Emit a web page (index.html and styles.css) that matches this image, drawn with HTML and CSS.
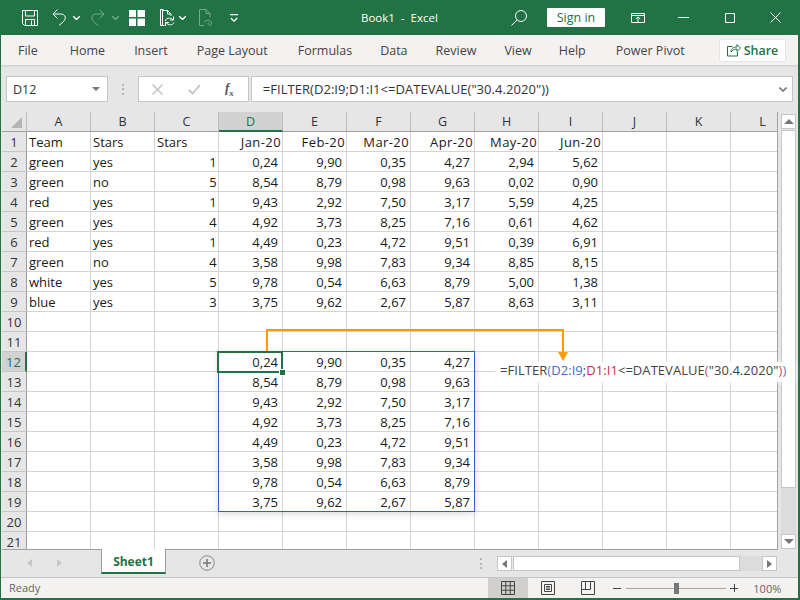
FILE: index.html
```html
<!DOCTYPE html>
<html lang="en">
<head>
<meta charset="utf-8">
<title>Book1 - Excel</title>
<link rel="stylesheet" href="styles.css">
</head>
<body>
<div class="app">
  <header class="titlebar">
    <div class="qat">
      <svg class="i save" width="16" height="16" viewBox="0 0 16 16"><path d="M.5.500h15v15H2.500l-2-2zM3.500.500v5.500h9V.5M3.500 15.500V9.500h9v6M9.500 10.500v5"/></svg>
      <svg class="i undo" width="14" height="17" viewBox="0 0 14 17"><path d="M5.500.5 1 5l4.500 4.500M1 5h7.500c5.500 0 6 5 2.500 8l-4 3.500"/></svg>
      <svg class="caret" width="7" height="4" viewBox="0 0 7 4"><path d="M0 0l3.500 3.500L7 0"/></svg>
      <svg class="i redo dim" width="14" height="17" viewBox="0 0 14 17"><path d="M8.500.5 13 5 8.500 9.500M13 5H5.500c-5.500 0-6 5-2.500 8l4 3.500"/></svg>
      <svg class="caret dim" width="7" height="4" viewBox="0 0 7 4"><path d="M0 0l3.500 3.500L7 0"/></svg>
      <svg class="form" width="16" height="16" viewBox="0 0 16 16"><path d="M0 0h7v7H0zM8.500 0H16v7H8.500zM0 8.500h7V16H0zM8.500 8.500H16V16H8.500z"/></svg>
      <svg class="i paste" width="15" height="17" viewBox="0 0 15 17"><path d="M2.500 16.500h-2V.5h3M4.500 16.500h-2V1.500h5l3.500 3.500v2M7.500 1.500V5H11M5.500 12c0-3 5-4 7.500-1M14 13.500c-1 3-6 3-7.500.500M13.500 7.500V11h-3.500M5.500 17v-3.500H9"/></svg>
      <svg class="caret" width="7" height="4" viewBox="0 0 7 4"><path d="M0 0l3.500 3.500L7 0"/></svg>
      <svg class="i print dim" width="14" height="17" viewBox="0 0 14 17"><path d="M.5 16.500V.5h6.500l4 4v4M7 .5v4h4M.5 16.500h4.500M5.500 13.500c0-2 4-3 6-1.500 2.500 2 .5 5-1.500 4-2-1-.5-3 1-2"/></svg>
      <svg class="customize" width="8" height="8" viewBox="0 0 8 8"><path d="M0 .5h8M.8 4l3.200 3.200L7.200 4"/></svg>
    </div>
    <div class="doc-title">Book1&nbsp; - &nbsp;Excel</div>
    <div class="win">
      <svg class="i search" width="16" height="16" viewBox="0 0 16 16"><circle cx="10" cy="6" r="5.500"/><path d="M6 10 .5 15.500"/></svg>
      <button class="signin">Sign in</button>
      <svg class="i display" width="14" height="10" viewBox="0 0 14 10"><path d="M.5.500h13v9H.5zM.5 2.500h13M7 9V4M4.800 6 7 3.800 9.200 6"/></svg>
      <svg class="i minimize" width="11" height="1" viewBox="0 0 11 1"><path d="M0 .5h11"/></svg>
      <svg class="i maximize" width="10" height="10" viewBox="0 0 10 10"><path d="M.5.500h9v9h-9z"/></svg>
      <svg class="i close" width="11" height="11" viewBox="0 0 11 11"><path d="M.5.500l10 10M10.500.500l-10 10"/></svg>
    </div>
  </header>

  <nav class="tabs">
    <span class="tab t-file">File</span>
    <span class="tab t-home">Home</span>
    <span class="tab t-insert">Insert</span>
    <span class="tab t-layout">Page Layout</span>
    <span class="tab t-formulas">Formulas</span>
    <span class="tab t-data">Data</span>
    <span class="tab t-review">Review</span>
    <span class="tab t-view">View</span>
    <span class="tab t-help">Help</span>
    <span class="tab t-pivot">Power Pivot</span>
    <span class="share">
      <svg class="share-icon" width="14" height="14" viewBox="0 0 14 14"><path d="M5.500 3.500H.5v9.500h10V9M4 9c0-4 3-5 6-5V1.500L13.500 5 10 8.500V6C7.500 6 5.500 7 4 9z"/></svg>
      Share
    </span>
  </nav>

  <section class="formulabar">
    <div class="namebox"><span>D12</span><i class="tri-down"></i></div>
    <div class="grip"></div>
    <div class="fx-buttons">
      <svg class="fx-x" width="11" height="11" viewBox="0 0 11 11"><path d="M.5.500l10 10M10.500.500l-10 10"/></svg>
      <svg class="fx-check" width="13" height="11" viewBox="0 0 13 11"><path d="M1 6l3.500 3.500L12 1"/></svg>
      <span class="fx-label">f<sub>x</sub></span>
    </div>
    <div class="formula-input"><span>=FILTER(D2:I9;D1:I1&lt;=DATEVALUE("30.4.2020"))</span>
      <svg class="chev" width="8" height="5" viewBox="0 0 8 5"><path d="M.5.500l3.500 3.500L7.500.500"/></svg>
    </div>
  </section>

  <section class="workarea">
    <div class="sheet">
      <div class="clip">
      <table class="cells">
        <thead>
          <tr><th class="corner"><i></i></th><th>A</th><th>B</th><th>C</th><th class="active">D</th><th>E</th><th>F</th><th>G</th><th>H</th><th>I</th><th>J</th><th>K</th><th>L</th></tr>
        </thead>
        <tbody>
          <tr><th>1</th><td>Team</td><td>Stars</td><td>Stars</td><td class="t">Jan-20</td><td class="t">Feb-20</td><td class="t">Mar-20</td><td class="t">Apr-20</td><td class="t">May-20</td><td class="t">Jun-20</td><td></td><td></td><td></td></tr>
          <tr><th>2</th><td>green</td><td>yes</td><td class="t">1</td><td class="n">0,24</td><td class="n">9,90</td><td class="n">0,35</td><td class="n">4,27</td><td class="n">2,94</td><td class="n">5,62</td><td></td><td></td><td></td></tr>
          <tr><th>3</th><td>green</td><td>no</td><td class="t">5</td><td class="n">8,54</td><td class="n">8,79</td><td class="n">0,98</td><td class="n">9,63</td><td class="n">0,02</td><td class="n">0,90</td><td></td><td></td><td></td></tr>
          <tr><th>4</th><td>red</td><td>yes</td><td class="t">1</td><td class="n">9,43</td><td class="n">2,92</td><td class="n">7,50</td><td class="n">3,17</td><td class="n">5,59</td><td class="n">4,25</td><td></td><td></td><td></td></tr>
          <tr><th>5</th><td>green</td><td>yes</td><td class="t">4</td><td class="n">4,92</td><td class="n">3,73</td><td class="n">8,25</td><td class="n">7,16</td><td class="n">0,61</td><td class="n">4,62</td><td></td><td></td><td></td></tr>
          <tr><th>6</th><td>red</td><td>yes</td><td class="t">1</td><td class="n">4,49</td><td class="n">0,23</td><td class="n">4,72</td><td class="n">9,51</td><td class="n">0,39</td><td class="n">6,91</td><td></td><td></td><td></td></tr>
          <tr><th>7</th><td>green</td><td>no</td><td class="t">4</td><td class="n">3,58</td><td class="n">9,98</td><td class="n">7,83</td><td class="n">9,34</td><td class="n">8,85</td><td class="n">8,15</td><td></td><td></td><td></td></tr>
          <tr><th>8</th><td>white</td><td>yes</td><td class="t">5</td><td class="n">9,78</td><td class="n">0,54</td><td class="n">6,63</td><td class="n">8,79</td><td class="n">5,00</td><td class="n">1,38</td><td></td><td></td><td></td></tr>
          <tr><th>9</th><td>blue</td><td>yes</td><td class="t">3</td><td class="n">3,75</td><td class="n">9,62</td><td class="n">2,67</td><td class="n">5,87</td><td class="n">8,63</td><td class="n">3,11</td><td></td><td></td><td></td></tr>
          <tr><th>10</th><td></td><td></td><td></td><td></td><td></td><td></td><td></td><td></td><td></td><td></td><td></td><td></td></tr>
          <tr><th>11</th><td></td><td></td><td></td><td></td><td></td><td></td><td></td><td></td><td></td><td></td><td></td><td></td></tr>
          <tr><th class="active-row">12</th><td></td><td></td><td></td><td class="n">0,24</td><td class="n">9,90</td><td class="n">0,35</td><td class="n">4,27</td><td></td><td></td><td></td><td></td><td></td></tr>
          <tr><th>13</th><td></td><td></td><td></td><td class="n">8,54</td><td class="n">8,79</td><td class="n">0,98</td><td class="n">9,63</td><td></td><td></td><td></td><td></td><td></td></tr>
          <tr><th>14</th><td></td><td></td><td></td><td class="n">9,43</td><td class="n">2,92</td><td class="n">7,50</td><td class="n">3,17</td><td></td><td></td><td></td><td></td><td></td></tr>
          <tr><th>15</th><td></td><td></td><td></td><td class="n">4,92</td><td class="n">3,73</td><td class="n">8,25</td><td class="n">7,16</td><td></td><td></td><td></td><td></td><td></td></tr>
          <tr><th>16</th><td></td><td></td><td></td><td class="n">4,49</td><td class="n">0,23</td><td class="n">4,72</td><td class="n">9,51</td><td></td><td></td><td></td><td></td><td></td></tr>
          <tr><th>17</th><td></td><td></td><td></td><td class="n">3,58</td><td class="n">9,98</td><td class="n">7,83</td><td class="n">9,34</td><td></td><td></td><td></td><td></td><td></td></tr>
          <tr><th>18</th><td></td><td></td><td></td><td class="n">9,78</td><td class="n">0,54</td><td class="n">6,63</td><td class="n">8,79</td><td></td><td></td><td></td><td></td><td></td></tr>
          <tr><th>19</th><td></td><td></td><td></td><td class="n">3,75</td><td class="n">9,62</td><td class="n">2,67</td><td class="n">5,87</td><td></td><td></td><td></td><td></td><td></td></tr>
          <tr><th>20</th><td></td><td></td><td></td><td></td><td></td><td></td><td></td><td></td><td></td><td></td><td></td><td></td></tr>
          <tr><th>21</th><td></td><td></td><td></td><td></td><td></td><td></td><td></td><td></td><td></td><td></td><td></td><td></td></tr>
        </tbody>
      </table>
      </div>
      <div class="spill-range"></div>
      <div class="selected-cell"><i class="handle"></i></div>
      <div class="callout">=FILTER<span class="pb">(</span><span class="blue">D2:I9</span>;<span class="red">D1:I1</span>&lt;=DATEVALUE<span class="pr">(</span>"30.4.2020"<span class="pr">)</span><span class="pb">)</span></div>
      <svg class="connector" width="355" height="40" viewBox="0 0 355 40"><path class="line" d="M50 24V3h296v23"/><path class="head" d="M341 25h10l-5 9z"/></svg>
    </div>
    <div class="vscroll">
      <div class="sb-btn"><i class="tri-up"></i></div>
      <div class="sb-thumb"></div>
      <div class="sb-trough"></div>
      <div class="sb-btn"><i class="tri-down-sb"></i></div>
    </div>
  </section>

  <section class="sheetbar">
    <i class="nav-l"></i><i class="nav-r"></i>
    <div class="sheet-tab">Sheet1</div>
    <svg class="add" width="16" height="16" viewBox="0 0 16 16"><circle cx="8" cy="8" r="7.250"/><path d="M8 4v8M4 8h8"/></svg>
    <div class="dots"></div>
    <div class="hscroll">
      <div class="hb"><i class="h-left"></i></div>
      <div class="h-thumb"></div>
      <div class="h-trough"></div>
      <div class="hb"><i class="h-right"></i></div>
    </div>
  </section>

  <footer class="status">
    <span class="ready">Ready</span>
    <div class="views">
      <div class="view on"><svg width="14" height="14" viewBox="0 0 14 14"><path d="M.5.500h13v13H.5zM.5 4.800h13M.5 9.200h13M4.800.500v13M9.200.500v13"/></svg></div>
      <div class="view"><svg width="14" height="14" viewBox="0 0 14 14"><path d="M.5.500h13v13H.5zM3.500 3.500h7v7h-7zM5 5.500h4M5 7h4M5 8.500h4"/></svg></div>
      <div class="view"><svg width="14" height="14" viewBox="0 0 14 14"><path d="M.5.500h13v13H.5zM.5 8.500h9v-8M4.500.500v8"/></svg></div>
    </div>
    <div class="zoom">
      <i class="minus"></i>
      <div class="slider"><i class="knob"></i></div>
      <i class="plus"></i>
      <span class="pct">100%</span>
    </div>
  </footer>
</div>
</body>
</html>
```
FILE: styles.css
```css
* { box-sizing: border-box; }
html, body { margin: 0; padding: 0; }
body { width: 800px; height: 600px; overflow: hidden; font-family: "Open Sans", "Noto Sans", sans-serif; }
svg { display: block; flex: none; fill: none; }
i { display: block; }

.app { width: 800px; height: 600px; display: flex; flex-direction: column; border: solid #217346; border-width: 0 2px 2px 1px; background: #e6e6e6; }

/* title bar */
.titlebar { height: 35px; flex: none; margin-right: -2px; margin-left: -1px; background: #217346; display: flex; align-items: center; color: #fff; position: relative; }
.qat { display: flex; align-items: center; }
.i path, .i circle { stroke: #fff; stroke-width: 1; }
.caret path { stroke: #fff; stroke-width: 1.400; }
.dim { opacity: .38; }
.save { margin-left: 22px; }
.undo { margin-left: 14px; }
.titlebar .caret { margin-left: 7px; }
.redo { margin-left: 11px; }
.form { margin-left: 10px; }
.form path { fill: #fff; }
.paste { margin-left: 15px; }
.qat .paste + .caret { margin-left: 4px; }
.print { margin-left: 13px; }
.customize { margin-left: 17px; }
.customize path { stroke: #fff; stroke-width: 1.300; }
.doc-title { position: absolute; left: 361px; top: 9px; font-size: 11.500px; line-height: 17px; white-space: nowrap; }
.win { margin-left: auto; display: flex; align-items: center; }
.search { margin-right: 20px; }
.signin { width: 58px; height: 19px; border: 0; padding: 0; background: #fff; color: #217346; font: 12.500px/19px "Open Sans", sans-serif; border-radius: 1px; }
.display { margin-left: 26px; }
.minimize { margin-left: 33px; }
.maximize { margin-left: 36px; }
.close { margin-left: 35px; margin-right: 19px; }

/* ribbon tabs */
.tabs { height: 30px; flex: none; background: #f3f2f1; position: relative; display: flex; align-items: center; font-size: 12.500px; color: #444; box-shadow: 0 1px 2px rgba(0,0,0,.12); }
.tab { white-space: nowrap; }
.t-file { margin-left: 17px; }
.t-home { margin-left: 32px; }
.t-insert { margin-left: 29px; }
.t-layout { margin-left: 29px; }
.t-formulas { margin-left: 30px; }
.t-data { margin-left: 28px; }
.t-review { margin-left: 28px; }
.t-view { margin-left: 28px; }
.t-help { margin-left: 27px; }
.t-pivot { margin-left: 30px; }
.share { margin-left: auto; margin-right: 12px; width: 67px; height: 23px; background: #fff; border: 1px solid #e6e6e6; border-radius: 2px; display: flex; align-items: center; justify-content: center; gap: 3px; color: #217346; font-size: 12.500px; font-weight: 600; }
.share-icon path { stroke: #217346; stroke-width: 1; }

/* formula bar */
.formulabar { height: 47px; flex: none; display: flex; align-items: flex-start; padding: 11px 5px 0 5px; }
.namebox { width: 102px; height: 26px; background: #fff; border: 1px solid #c6c6c6; display: flex; align-items: center; justify-content: space-between; padding: 0 7px 0 6px; font-size: 12.500px; color: #333; }
.tri-down { width: 0; height: 0; border: 4px solid transparent; border-top: 4px solid #777; border-bottom: 0; }
.grip { width: 2px; height: 11px; margin: 8px 14px 0 14px; background: repeating-linear-gradient(#b5b5b5 0 2px, transparent 2px 4.500px); }
.fx-buttons { width: 111px; height: 26px; background: #fff; border: 1px solid #c6c6c6; display: flex; align-items: center; padding-left: 13px; }
.fx-x path { stroke: #c2c2c2; stroke-width: 1.500; }
.fx-check { margin-left: 25px; }
.fx-check path { stroke: #c2c2c2; stroke-width: 1.800; }
.fx-label { margin: -3px 0 0 24px; font: italic 700 13px "Liberation Serif", serif; color: #555; }
.fx-label sub { font-size: 9px; line-height: 0; }
.formula-input { width: 543px; height: 26px; margin-left: 2px; background: #fff; border: 1px solid #c6c6c6; display: flex; align-items: center; justify-content: space-between; padding: 0 5px 0 11px; font-size: 13px; letter-spacing: .05px; color: #333; }
.chev path { stroke: #777; stroke-width: 1.600; }

/* work area */
.workarea { height: 438px; flex: none; display: flex; padding-left: 1px; }
.sheet { width: 776px; height: 438px; position: relative; border-right: 1px solid #a0a0a0; border-bottom: 1px solid #a0a0a0; }
.clip { height: 100%; overflow: hidden; }
.cells { border-collapse: separate; border-spacing: 0; table-layout: fixed; width: 793px; font-size: 13px; color: #1a1a1a; }
.cells th, .cells td { height: 20px; padding: 0; overflow: hidden; white-space: nowrap; font-weight: 400; }
.cells td { width: 64px; background: #fff; border-right: 1px solid #d4d4d4; border-bottom: 1px solid #d4d4d4; padding: 1px 4px 0 2px; line-height: 18px; }
.cells td.n { text-align: right; }
.cells td.t { text-align: right; padding-right: 1px; letter-spacing: .4px; }
.cells thead th { width: 64px; font-size: 12.500px; background: #e6e6e6; border-right: 1px solid #bdbdbd; border-bottom: 1px solid #9f9f9f; color: #333; }
.cells thead th.corner { width: 25px; position: relative; }
.corner i { position: absolute; right: 4px; bottom: 3px; width: 0; height: 0; border-style: solid; border-width: 0 0 11px 11px; border-color: transparent transparent #b5b5b5 transparent; }
.cells thead th.active { background: #d2d2d2; border-bottom: 2px solid #217346; color: #217346; }
.cells tbody th { padding-top: 1px; line-height: 18px; background: #e6e6e6; border-right: 1px solid #9f9f9f; border-bottom: 1px solid #c6c6c6; color: #333; }
.cells tbody th.active-row { background: #d2d2d2; border-right: 2px solid #217346; color: #217346; }

.spill-range { position: absolute; left: 216px; top: 239px; width: 257px; height: 161px; border: 1px solid #2f62b8; box-shadow: 0 2px 7px rgba(0,0,0,.14); }
.selected-cell { position: absolute; left: 215px; top: 239px; width: 66px; height: 22px; border: 2px solid #217346; }
.handle { position: absolute; right: -4px; bottom: -4px; width: 5px; height: 5px; background: #217346; outline: 1px solid #fff; }
.connector { position: absolute; left: 215px; top: 215px; }
.connector .line { stroke: #fd9c05; stroke-width: 2; }
.connector .head { fill: #fd9c05; }
.callout { position: absolute; left: 494px; top: 250px; width: 298px; height: 20px; padding-left: 4px; background: rgba(255,255,255,.95); font-size: 13px; letter-spacing: .05px; line-height: 16px; color: #444; white-space: nowrap; box-shadow: 0 0 5px rgba(255,255,255,.8); }
.blue { color: #3d6fc5; }
.red { color: #c8304c; }
.pb { color: #5b80bb; }
.pr { color: #c3506e; }

/* vertical scroll */
.vscroll { flex: none; width: 15px; margin-left: 3px; padding: 2px 0 1px; display: flex; flex-direction: column; gap: 1px; height: 438px; }
.sb-btn { height: 15px; flex: none; background: #fff; border: 1px solid #c6c6c6; display: flex; align-items: center; justify-content: center; }
.tri-up { width: 0; height: 0; border: 5px solid transparent; border-bottom: 5px solid #777; border-top: 0; }
.tri-down-sb { width: 0; height: 0; border: 5px solid transparent; border-top: 5px solid #777; border-bottom: 0; }
.sb-thumb { height: 358px; flex: none; background: #fff; border: 1px solid #c6c6c6; }
.sb-trough { flex: 1; margin: -1px 0; background: #dcdcdc; }

/* sheet tabs */
.sheetbar { height: 28px; flex: none; display: flex; align-items: flex-start; position: relative; border-bottom: 1px solid #c6c6c6; }
.nav-l { width: 0; height: 0; margin: 9px 0 0 26px; border: 4px solid transparent; border-right: 5px solid #c6c6c6; border-left: 0; }
.nav-r { width: 0; height: 0; margin: 9px 0 0 25px; border: 4px solid transparent; border-left: 5px solid #c6c6c6; border-right: 0; }
.sheet-tab { width: 65px; height: 25px; margin-left: 39px; margin-top: -1px; background: #fff; border: solid #9f9f9f; border-width: 0 1px; border-bottom: 2px solid #217346; color: #217346; font-weight: 700; font-size: 12px; line-height: 25px; text-align: center; }
.add { margin: 5px 0 0 33px; }
.add circle { stroke: #8a8a8a; stroke-width: 1; }
.add path { stroke: #777; stroke-width: 1.500; }
.dots { width: 2px; height: 11px; margin: 8px 0 0 265px; background: repeating-linear-gradient(#b5b5b5 0 2px, transparent 2px 4.500px); }
.hscroll { margin: 6px 0 0 15px; display: flex; height: 15px; width: 280px; }
.hb { width: 15px; flex: none; background: #fff; border: 1px solid #c6c6c6; display: flex; align-items: center; justify-content: center; }
.h-left { width: 0; height: 0; border: 4px solid transparent; border-right: 5px solid #777; border-left: 0; }
.h-right { width: 0; height: 0; border: 4px solid transparent; border-left: 5px solid #777; border-right: 0; }
.h-thumb { width: 227px; flex: none; background: #fff; border: 1px solid #c6c6c6; margin-left: 1px; }
.h-trough { flex: 1; background: #dcdcdc; }

/* status bar */
.status { flex: 1; background: #f3f2f1; display: flex; align-items: stretch; font-size: 11px; color: #666; position: relative; }
.ready { margin-left: 8px; line-height: 20px; }
.views { display: flex; margin-left: 448px; }
.view { width: 40px; display: flex; align-items: center; justify-content: center; }
.view.on { background: #d2d0ce; }
.view path { stroke: #444; stroke-width: 1; }
.zoom { display: flex; align-items: center; padding-left: 5px; }
.minus { width: 8px; height: 1px; background: #444; }
.slider { width: 100px; height: 1px; margin-left: 5px; background: #a8a8a8; position: relative; }
.knob { position: absolute; left: 48px; top: -5px; width: 5px; height: 11px; background: #777; }
.plus { width: 8px; height: 8px; margin-left: 4px; background: linear-gradient(#444,#444) center/8px 1px no-repeat, linear-gradient(#444,#444) center/1px 8px no-repeat; }
.pct { margin-left: 15px; }
```
